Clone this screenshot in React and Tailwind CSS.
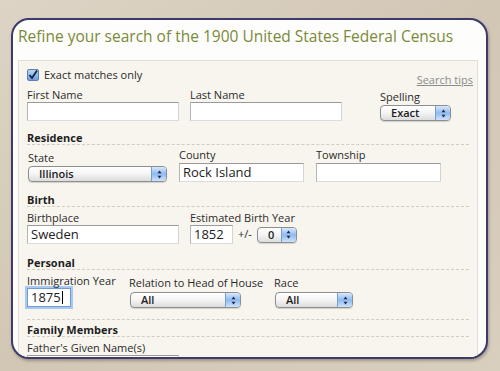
const font = { fontFamily: '"Open Sans", "Noto Sans", Arial, sans-serif' };

function Label({ children, className = "" }) {
  return (
    <div className={`h-[12px] text-[11px] leading-[12px] text-[#2b2b2b] whitespace-nowrap ${className}`}>
      {children}
    </div>
  );
}

function TextBox({ value = "", className = "", focused = false }) {
  return (
    <div
      className={`h-[19px] border bg-white px-[3px] text-[13px] leading-[17px] text-[#222] flex items-center ${
        focused
          ? "border-[#6f9bd6] shadow-[0_0_0_2px_#a9c8ef]"
          : "border-t-[#9a9a9a] border-l-[#b5b5b5] border-r-[#d4d4d4] border-b-[#dcdcdc]"
      } ${className}`}
    >
      {value}
      {focused && <span className="ml-[1px] inline-block h-[13px] w-[1px] bg-black" />}
    </div>
  );
}

function Select({ value, className = "" }) {
  return (
    <div
      className={`h-[16px] flex items-stretch rounded-[4px] border border-[#8e8e8e] bg-gradient-to-b from-white via-[#f4f4f4] to-[#dcdcdc] shadow-[0_1px_1px_rgba(0,0,0,0.15)] overflow-hidden ${className}`}
    >
      <div className="flex-1 pl-[10px] text-[11px] font-semibold leading-[14px] text-[#1d1d1d]">{value}</div>
      <div className="w-[15px] flex items-center justify-center border-l border-[#7b9ccc] bg-gradient-to-b from-[#d8e8fb] via-[#8fbaf0] to-[#cfe2fa]">
        <svg width="5" height="9" viewBox="0 0 5 9">
          <path d="M2.5 0.5 L4.5 3.3 L0.5 3.3 Z" fill="#1e2a44" />
          <path d="M2.5 8.5 L4.5 5.7 L0.5 5.7 Z" fill="#1e2a44" />
        </svg>
      </div>
    </div>
  );
}

function SectionHead({ children, className = "" }) {
  return (
    <div className={`h-[13px] border-b border-dashed border-[#cfcdc4] text-[11px] font-bold leading-[12px] text-[#1e1e1e] ${className}`}>
      {children}
    </div>
  );
}

export default function App() {
  return (
    <div className="w-[500px] h-[371px] overflow-hidden bg-gradient-to-br from-[#ddd4c5] via-[#d2c7b5] to-[#d9cfbf] pt-[18px] pl-[11px]" style={font}>
      <div className="w-[477px] h-[341px] rounded-[18px] border-2 border-[#3c3b6b] bg-[#fdfdfb] overflow-hidden shadow-[1px_2px_3px_rgba(60,50,40,0.35)]">
        <div className="h-[40px] pl-[5px] pt-[4px] text-[15.5px] leading-[24px] text-[#7a8a3a] whitespace-nowrap">
          Refine your search of the 1900 United States Federal Census
        </div>
        <div className="ml-[5px] w-[460px] h-[320px] border border-[#e0ded6] bg-[#f7f5ee] px-[8px] pt-[8px]">
          {/* exact matches */}
          <div className="flex justify-between items-start h-[14px]">
            <div className="flex items-center">
              <div className="w-[12px] h-[12px] rounded-[2px] border border-[#5a7fb8] bg-gradient-to-b from-[#bcd6f5] to-[#6e9fe0] flex items-center justify-center">
                <svg width="10" height="10" viewBox="0 0 10 10">
                  <path d="M1.5 5 L4 8 L9 0.5" fill="none" stroke="#12233f" strokeWidth="1.8" />
                </svg>
              </div>
              <span className="ml-[5px] text-[11px] leading-[12px] text-[#2b2b2b]">Exact matches only</span>
            </div>
            <span className="mt-[5px] mr-[-4px] text-[11px] leading-[12px] text-[#8c8c8c] underline">Search tips</span>
          </div>

          {/* names */}
          <div className="flex mt-[6px]">
            <div className="w-[152px]">
              <Label>First Name</Label>
              <TextBox className="mt-[1px]" />
            </div>
            <div className="ml-[11px] w-[152px]">
              <Label>Last Name</Label>
              <TextBox className="mt-[1px]" />
            </div>
            <div className="ml-[38px] pt-[2px]">
              <Label>Spelling</Label>
              <Select value="Exact" className="mt-[2px] w-[71px]" />
            </div>
          </div>

          <SectionHead className="mt-[11px]">Residence</SectionHead>
          <div className="flex items-end mt-[4px]">
            <div className="w-[152px] pl-[1px]">
              <Label>State</Label>
              <Select value="Illinois" className="mt-[2px] w-[139px]" />
            </div>
            <div className="w-[137px]">
              <Label>County</Label>
              <TextBox value="Rock Island" className="mt-[2px] w-[125px]" />
            </div>
            <div>
              <Label>Township</Label>
              <TextBox className="mt-[2px] w-[125px]" />
            </div>
          </div>

          <SectionHead className="mt-[12px]">Birth</SectionHead>
          <div className="flex mt-[5px]">
            <div className="w-[163px]">
              <Label>Birthplace</Label>
              <TextBox value="Sweden" className="mt-[1px] w-[152px]" />
            </div>
            <div>
              <Label>Estimated Birth Year</Label>
              <div className="mt-[1px] flex items-center">
                <TextBox value="1852" className="w-[43px]" />
                <span className="ml-[5px] text-[11px] text-[#2b2b2b]">+/-</span>
                <Select value="0" className="ml-[5px] w-[40px]" />
              </div>
            </div>
          </div>

          <SectionHead className="mt-[13px]">Personal</SectionHead>
          <div className="flex mt-[5px]">
            <div className="w-[102px]">
              <Label>Immigration Year</Label>
              <TextBox value="1875" focused className="mt-[1px] w-[44px]" />
            </div>
            <div className="w-[145px] pt-[2px]">
              <Label>Relation to Head of House</Label>
              <Select value="All" className="mt-[3px] w-[111px] ml-[1px]" />
            </div>
            <div className="pt-[2px]">
              <Label>Race</Label>
              <Select value="All" className="mt-[3px] w-[78px] ml-[1px]" />
            </div>
          </div>

          <div className="mt-[11px] border-t border-dashed border-[#cfcdc4]" />
          <SectionHead className="mt-[4px]">Family Members</SectionHead>
          <Label className="mt-[5px]">Father's Given Name(s)</Label>
          <TextBox className="mt-[1px] w-[152px]" />
        </div>
      </div>
    </div>
  );
}
